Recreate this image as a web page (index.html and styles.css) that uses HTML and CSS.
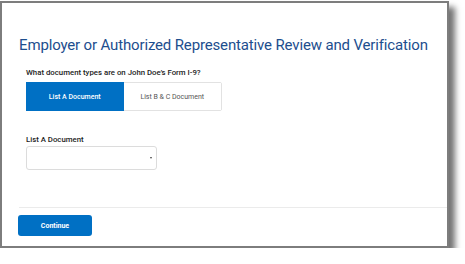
FILE: index.html
```html
<!DOCTYPE html>
<html>
<head>
<meta charset="utf-8">
<link rel="stylesheet" href="styles.css">
</head>
<body>
<div class="frame">
  <div class="content">
    <h1 class="title">Employer or Authorized Representative Review and Verification</h1>
    <div class="group">
      <p class="question">What document types are on John Doe’s Form I-9?</p>
      <div class="toggle">
        <button class="seg seg-active">List A Document</button>
        <button class="seg">List B &amp; C Document</button>
      </div>
    </div>
    <div class="group group-select">
      <label class="label">List A Document</label>
      <div class="select"><span class="caret"></span></div>
    </div>
  </div>
  <div class="footer">
    <button class="btn">Continue</button>
  </div>
</div>
</body>
</html>
```
FILE: styles.css
```css
html, body {
  margin: 0;
  padding: 0;
  background: #ffffff;
}
body {
  font-family: Roboto, "Liberation Sans", sans-serif;
  color: #222;
}
.frame {
  margin-top: 1px;
  width: 449px;
  height: 247px;
  box-sizing: border-box;
  border: 2px solid #7d7d7d;
  box-shadow: 6px 6px 6px rgba(0,0,0,0.55);
  background: #fff;
  display: flex;
  flex-direction: column;
}
.content {
  padding-left: 17px;
  flex: 1;
}
.title {
  margin: 32px 0 0 0;
  font-size: 15px;
  letter-spacing: -0.15px;
  line-height: 20px;
  font-weight: 400;
  color: #1d4e8e;
  white-space: nowrap;
}
.group {
  padding-left: 7px;
}
.question {
  margin: 12px 0 0 0;
  font-size: 7.8px;
  line-height: 12px;
  font-weight: 500;
  color: #222;
}
.toggle {
  display: flex;
  margin-top: 3px;
  width: 196px;
  height: 29px;
  border: 1px solid #e2e2e2;
  box-sizing: border-box;
  border-radius: 2px;
}
.seg {
  flex: 1;
  border: none;
  background: #fff;
  font-family: inherit;
  font-size: 7px;
  color: #555;
  padding: 0;
}
.seg-active {
  background: #0070c4;
  color: #fff;
  font-weight: 500;
  margin: -1px 0 -1px -1px;
}
.group-select {
  margin-top: 23px;
}
.label {
  display: block;
  font-size: 7.8px;
  line-height: 12px;
  font-weight: 500;
  color: #222;
}
.select {
  width: 131px;
  height: 24px;
  box-sizing: border-box;
  border: 1px solid #dcdcdc;
  border-radius: 3px;
  display: flex;
  align-items: center;
  justify-content: flex-end;
  padding-right: 4px;
}
.caret {
  width: 0;
  height: 0;
  border-left: 1.5px solid transparent;
  border-right: 1.5px solid transparent;
  border-top: 2.5px solid #444;
}
.footer {
  margin-left: 17px;
  border-top: 1px solid #ebebeb;
  padding-top: 7px;
  height: 39px;
  box-sizing: border-box;
}
.btn {
  display: block;
  margin-left: -1px;
  width: 74px;
  height: 21px;
  border: none;
  border-radius: 3px;
  background: #0070c4;
  color: #fff;
  font-family: inherit;
  font-size: 7px;
  font-weight: 700;
  padding: 0;
}
```
